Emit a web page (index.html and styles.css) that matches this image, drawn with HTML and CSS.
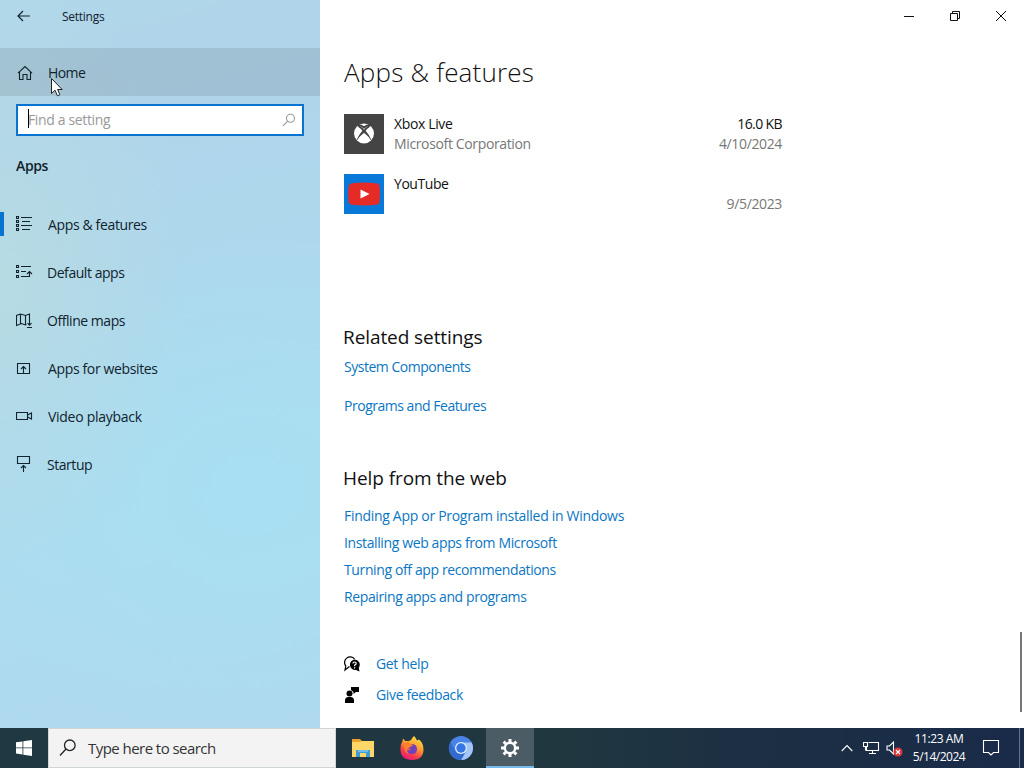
FILE: index.html
```html
<!DOCTYPE html>
<html lang="en">
<head>
<meta charset="utf-8">
<title>Settings</title>
<link rel="stylesheet" href="styles.css">
</head>
<body>
<div class="window">
  <aside class="sidebar">
    <header class="titlebar">
      <svg class="back" width="14" height="12" viewBox="0 0 14 12"><path d="M13 6H1M6 1L1 6l5 5"/></svg>
      <span class="title">Settings</span>
    </header>
    <a class="home">
      <svg class="icon" width="16" height="16" viewBox="0 0 16 16"><path d="M1 8.200L8 1.500l7 6.700M2.500 7v7.500h3.500V9.500h4v5h3.500V7"/></svg>
      <span>Home</span>
    </a>
    <div class="search">
      <span class="caret"></span><span class="placeholder">Find a setting</span>
      <svg class="search-icon" width="14" height="14" viewBox="0 0 14 14"><circle cx="8.500" cy="5.200" r="4"/><path d="M5.600 8.200L1 12.800"/></svg>
    </div>
    <h2 class="section">Apps</h2>
    <nav class="nav">
      <a class="item active"><svg class="icon" width="17" height="16" viewBox="0 0 17 16"><path d="M.5.5h2v2h-2zM.5 4.500h2v2h-2zM.5 8.500h2v2h-2zM.5 12.500h2v2h-2zM5 1.500h11M6 5.500h8M5 9.500h11M6 13.500h8"/></svg><span>Apps &amp; features</span></a>
      <a class="item"><svg class="icon" width="17" height="16" viewBox="0 0 17 16"><path d="M.5 1.500h2v2h-2zM.5 6.500h2v2h-2zM.5 11.500h2v2h-2zM5 2.500h10M5 7.500h5M5 12.500h8.500V7.500M11 10l2.500-2.500L16 10"/></svg><span class="tight">Default apps</span></a>
      <a class="item"><svg class="icon low" width="17" height="16" viewBox="0 0 17 16"><path d="M10.500 11.500l-1 .5-4-1.500-5 2v-10l4-1.500 5 1.500 4-1.500v6M4.500 1v9.500M9.500 2.500V12M13.500 6v6M11.500 10.200l2 2 2-2M11 14.500h5"/></svg><span class="tight">Offline maps</span></a>
      <a class="item"><svg class="icon low" width="17" height="16" viewBox="0 0 17 16"><path d="M1.500 2.500h12v10h-12zM7.500 12V5.500M5 8l2.500-2.500L10 8"/></svg><span>Apps for websites</span></a>
      <a class="item"><svg class="icon low" width="17" height="16" viewBox="0 0 17 16"><path d="M.5 3.500h11v7H.5zM11.500 6l4-2v6l-4-2"/></svg><span class="video">Video playback</span></a>
      <a class="item"><svg class="icon" width="17" height="16" viewBox="0 0 17 16"><path d="M1.500.5h12v7h-12zM7.500 16v-6M5 12l2.500-2.500L10 12"/></svg><span class="tight">Startup</span></a>
    </nav>
    <svg class="cursor" width="14" height="21" viewBox="0 0 14 21"><path d="M1.500 1.500v15l3.500-3.300 2.400 5.600 2.500-1.100-2.300-5.200h4.600z"/></svg>
  </aside>

  <main class="content">
    <div class="controls">
      <svg width="46" height="32" viewBox="0 0 46 32"><path d="M18 16.500h10"/></svg>
      <svg width="46" height="32" viewBox="0 0 46 32"><path d="M18.500 13.500h7v7h-7zM20.500 13.500v-2h7v7h-2"/></svg>
      <svg width="46" height="32" viewBox="0 0 46 32"><path d="M18 11l10 10M28 11L18 21"/></svg>
    </div>
    <h1>Apps &amp; features</h1>
    <div class="apps">
      <div class="app">
        <svg width="40" height="40" viewBox="0 0 40 40"><path fill="#444" d="M0 0h40v40H0z"/><circle cx="20" cy="19.500" r="10" fill="#fff"/><path d="M13.500 11.500Q17 10.500 20 13.500q3-3 6.500-2" fill="none" stroke="#444" stroke-width="2"/><path d="M12 28Q14.500 20 20 15.500 25.500 20 28 28 25 22.500 20 18.800 15 22.500 12 28z" fill="#444"/><path d="M14.500 12Q18 14 20 17.500 22 14 25.500 12" fill="none" stroke="#444" stroke-width="2"/></svg>
        <div class="app-name"><div>Xbox Live</div><div class="muted">Microsoft Corporation</div></div>
        <div class="app-meta"><div class="size">16.0 KB</div><div class="muted">4/10/2024</div></div>
      </div>
      <div class="app">
        <svg width="40" height="40" viewBox="0 0 40 40"><path fill="#0878d9" d="M0 0h40v40H0z"/><path fill="#e62b26" d="M8 9.200q12-1.200 24 0 3.300.3 3.600 3 .8 8 0 15.600-.4 2.700-3.600 3-12 1.200-24 0-3-.3-3.500-3-.8-8 0-15.600.5-2.700 3.500-3z"/><path fill="#fff" d="M16.500 15.500v9l9-4.500z"/></svg>
        <div class="app-name tight">YouTube</div>
        <div class="app-meta"><div>&nbsp;</div><div class="muted">9/5/2023</div></div>
      </div>
    </div>
    <section class="related">
      <h3>Related settings</h3>
      <a>System Components</a>
      <a>Programs and Features</a>
    </section>
    <section class="web-help">
      <h3>Help from the web</h3>
      <a>Finding App or Program installed in Windows</a>
      <a>Installing web apps from Microsoft</a>
      <a>Turning off app recommendations</a>
      <a>Repairing apps and programs</a>
    </section>
    <footer class="support">
      <a><svg width="16" height="16" viewBox="0 0 16 16"><path d="M5.500 10.500L1 14l.8-4A5.200 5.200 0 1 1 10.500 3" fill="none" stroke="#000" stroke-width="1.200"/><path d="M10.500 3.500a5.300 5.300 0 0 1 4.300 8.300l.7 3.700-3.500-1.500A5.300 5.300 0 1 1 10.500 3.500z"/><path d="M9 7.500q0-1.500 1.600-1.500T12.200 7.500Q12.200 8.300 10.600 9.200v1M10.600 11.200v1.300" fill="none" stroke="#fff" stroke-width="1.200"/></svg><span>Get help</span></a>
      <a><svg width="16" height="16" viewBox="0 0 16 16"><circle cx="5.500" cy="6.500" r="3"/><path d="M1 16v-2.500q0-3.500 3.500-3.500h2q3.500 0 3.500 3.500V16zM7 0h8v5h-3l-2.500 2V5L7 3z"/></svg><span>Give feedback</span></a>
    </footer>
    <div class="scrollbar"></div>
  </main>
</div>

<div class="taskbar">
  <div class="start"><svg width="16" height="16" viewBox="0 0 16 16"><path fill="#fff" d="M0 2.300L6.500 1.400v6.100H0zM7.300 1.300L16 0v7.500H7.300zM0 8.300h6.500v6.200L0 13.600zM7.300 8.300H16V16l-8.700-1.300z"/></svg></div>
  <div class="task-search"><svg width="18" height="18" viewBox="0 0 18 18"><circle cx="10.800" cy="6.300" r="5.300"/><path d="M7 10L1 16.500"/></svg><span>Type here to search</span></div>
  <div class="task"><svg width="24" height="24" viewBox="0 0 24 24"><path fill="#e9a32b" d="M1 3h8l2 2h12v4H1z"/><path fill="#ffd768" d="M1 6h8l2-1h12v16H1z"/><path fill="#3e9cd7" d="M5 21v-7h14v7h-4v-4H9v4z"/><path fill="#70bee7" d="M7 14h10v2H7z"/></svg></div>
  <div class="task"><svg width="26" height="26" viewBox="0 0 26 26">
    <defs><linearGradient id="fox" x1=".8" y1="0" x2=".3" y2="1"><stop offset="0" stop-color="#ffe847"/><stop offset=".45" stop-color="#ff9730"/><stop offset=".75" stop-color="#fa3c4c"/><stop offset="1" stop-color="#e51b77"/></linearGradient></defs>
    <path fill="url(#fox)" d="M15 1q2 2 3 4.500l2-1q4.500 4 4.500 9.500 0 11-11.500 11T1.500 14q0-5 2-8l.5-2.500L6.500 6 10 6l2-1q1-2 3-4z"/><path fill="#7340bd" d="M12 9q6 0 6 5t-5 5-5-4q2 1 4-1-3 0-4-2z"/><path fill="#ff8128" d="M5 9l4-2q1 2 5 3-1 1.500-3 2l-3 2q-.5 3 2 5-5-1-5-10z"/></svg></div>
  <div class="task"><svg width="26" height="26" viewBox="0 0 26 26"><circle cx="13" cy="13" r="12" fill="#4a83e8"/><path fill="#a3c5f8" d="M13 7.500h10.700A12 12 0 0 1 13 25l5-9z"/><path fill="#326bd0" d="M2.500 7A12 12 0 0 0 13 25l4.500-8H8z"/><circle cx="13" cy="13" r="6" fill="#dfeafc"/><circle cx="13" cy="13" r="4.700" fill="#3576e5"/></svg></div>
  <div class="task selected"><svg width="20" height="20" viewBox="0 0 20 20"><g fill="none" stroke="#fff"><circle cx="10" cy="10" r="5.200" stroke-width="2.500"/><path stroke-width="3" d="M10 1v3M10 16v3M1 10h3M16 10h3M3.640 3.640l2.120 2.120M14.240 14.240l2.120 2.120M3.640 16.360l2.120-2.120M14.240 5.760l2.120-2.120"/></g></svg></div>
  <div class="tray">
    <svg class="line chevron" width="12" height="8" viewBox="0 0 12 8"><path d="M.7 7L6 1.500 11.300 7"/></svg>
    <svg class="line network" width="17" height="16" viewBox="0 0 17 16"><path d="M5.500 2.500h10v8h-12v-4M.5 2.500h4v4h-4zM2.500 6.500v4M9.500 10.500v3M6 13.500h7"/></svg>
    <svg class="line sound" width="17" height="17" viewBox="0 0 17 17"><path d="M1 6h2.500L7.500 2v12L3.500 10H1z"/><circle cx="12" cy="12" r="4.500" fill="#d9343a" stroke="none"/><path d="M10 10l4 4M14 10l-4 4"/></svg>
    <div class="clock"><div class="time">11:23 AM</div><div class="date">5/14/2024</div></div>
    <svg class="line notice" width="18" height="18" viewBox="0 0 18 18"><path d="M1.500 1.500h15v12h-5L9 16l-2.500-2.500h-5z"/></svg>
    <div class="show-desktop"></div>
  </div>
</div>
</body>
</html>
```
FILE: styles.css
```css
* { box-sizing: border-box; }
body { margin: 0; width: 1024px; height: 768px; overflow: hidden; font: 14px/20px "Open Sans", "Noto Sans", sans-serif; letter-spacing: -.36px; color: #111; background: #fff; }
h1, h2, h3 { margin: 0; font-weight: 400; }
svg { display: block; flex: none; }
.window { display: grid; grid-template-columns: 320px 1fr; height: 728px; }

.sidebar { position: relative; color: #10232e; background: radial-gradient(ellipse 190px 300px at 0 270px, #b7dbe3 0, #b7dbe300 100%), radial-gradient(ellipse 300px 260px at 250px 490px, #a8dff2 0, #a8dff200 100%), linear-gradient(165deg, #b0d8e9 0, #b0d4ea 12%, #add8ed 45%, #addcef 70%, #afd8ee 100%); }
.titlebar { display: flex; align-items: center; height: 32px; margin-bottom: 16px; padding-left: 17px; font-size: 12px; letter-spacing: -.26px; }
.back { fill: none; stroke: #10232e; stroke-width: 1.2; }
.title { margin: 2px 0 0 31px; }
.icon { fill: none; stroke: #10232e; stroke-width: 1.1; }
.home { display: flex; align-items: center; gap: 15px; height: 48px; padding: 2px 0 0 17px; background: rgba(100, 115, 125, .2); letter-spacing: -.6px; }
.search { display: flex; align-items: center; height: 32px; margin: 8px 16px 20px; padding: 0 6px 0 10px; border: 2px solid #0873d0; background: #fff; }
.caret { width: 1px; height: 19px; margin: -3px -1px 0 0; background: #000; }
.placeholder { flex: 1; margin-top: -1px; color: #999; }
.search-icon { fill: none; stroke: #999; stroke-width: 1.1; }
.section { padding-left: 16px; font-size: 14px; font-weight: 600; }
.nav { padding-top: 25px; }
.item { display: flex; align-items: center; gap: 15px; height: 48px; padding-left: 16px; }
.item .icon { margin-top: -2px; }
.item .low { margin-top: 0; }
.item .tight { margin-left: -1px; }
.item .video { letter-spacing: -.28px; }
.tight { letter-spacing: -.45px; }
.active { background: linear-gradient(#0873d0, #0873d0) 0 11px / 4px 24px no-repeat; }
.cursor { position: absolute; left: 50px; top: 77px; fill: #fff; stroke: #222; stroke-width: 1; }

.content { position: relative; padding-left: 24px; }
.controls { display: flex; justify-content: flex-end; height: 32px; }
.controls svg { fill: none; stroke: #111; stroke-width: 1; }
h1 { margin-top: 22px; font-size: 26px; line-height: 36px; font-weight: 340; letter-spacing: .2px; }
.apps { display: grid; gap: 20px; width: 438px; margin-top: 24px; }
.app { display: flex; height: 40px; gap: 10px; }
.app-name { flex: 1; }
.app-meta { text-align: right; }
.size { letter-spacing: -.6px; }
.muted { color: #777; }
h3 { font-size: 19px; line-height: 28px; letter-spacing: -.08px; margin-left: -1px; }
.related { margin-top: 109px; }
.related a, .web-help a { display: block; width: max-content; color: #0a76c4; }
.related a { letter-spacing: -.48px; }
.web-help a { letter-spacing: -.38px; }
.web-help a:first-of-type { letter-spacing: -.3px; }
.related h3 { margin-bottom: 6px; }
.related a + a { margin-top: 19px; }
.web-help { margin-top: 48px; }
.web-help h3 { margin-bottom: 14px; }
.web-help a + a { margin-top: 7px; }
.support { margin-top: 47px; display: grid; gap: 11px; }
.support a { display: flex; align-items: center; gap: 16px; color: #0a76c4; }
.scrollbar { position: absolute; right: 2px; top: 632px; width: 2px; height: 80px; background: #777; }

.taskbar { display: flex; height: 40px; background: linear-gradient(90deg, #203842 0, #203740 56%, #1c2f43 72%, #192b49 100%); }
.start { display: grid; place-items: center; width: 48px; }
.task-search { display: flex; align-items: center; gap: 11px; width: 288px; padding-left: 10px; border: 1px solid #d2d5d6; background: #f3f3f3; color: #333; font-size: 15px; letter-spacing: -.55px; }
.task-search svg { fill: none; stroke: #222; stroke-width: 1.3; }
.task { display: grid; place-items: center; width: 49px; padding-left: 5px; }
.selected { margin-left: 3px; width: 48px; padding: 2px 0 0; background: #4b5c65; border-bottom: 2px solid #76b9ed; }
.tray { display: flex; align-items: center; margin-left: auto; color: #fff; }
.line { fill: none; stroke: #fff; stroke-width: 1.1; }
.network { margin-left: 10px; }
.sound { margin-left: 6px; }
.clock { width: 62px; margin-left: 5px; text-align: center; font-size: 12px; line-height: 18px; letter-spacing: -.5px; }
.time { letter-spacing: -.4px; }
.notice { margin-left: 12px; }
.show-desktop { width: 5px; height: 40px; margin-left: 19px; border-left: 1px solid #65758a; }
```
